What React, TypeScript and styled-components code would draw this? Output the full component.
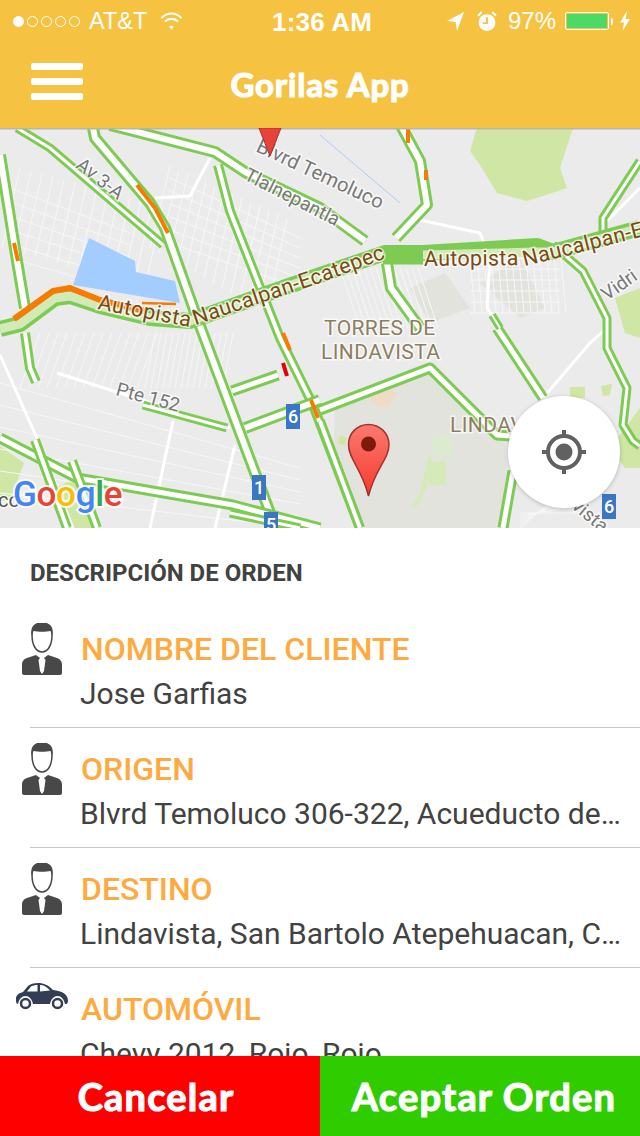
import styled, { createGlobalStyle } from 'styled-components'

const GlobalStyle = createGlobalStyle`
  html, body {
    margin: 0;
    padding: 0;
    background: #fff;
    font-family: Roboto, "Liberation Sans", sans-serif;
  }
`

const Screen = styled.div`
  width: 640px;
  height: 1136px;
  display: flex;
  flex-direction: column;
  overflow: hidden;
`

const Header = styled.header`
  height: 128px;
  flex: none;
  background: #f5c242;
  color: #fff;
  display: flex;
  flex-direction: column;
`

const StatusBar = styled.div`
  height: 40px;
  box-sizing: border-box;
  padding: 2px 10px 0 13px;
  display: flex;
  align-items: center;
  font-family: "Liberation Sans", Arial, sans-serif;
  font-size: 24px;
  position: relative;
`

const StatusLeft = styled.div`
  display: flex;
  align-items: center;
  gap: 9px;
`

const StatusRight = styled.div`
  margin-left: auto;
  display: flex;
  align-items: center;
`

const Clock = styled.div`
  position: absolute;
  left: 272px;
  top: 7px;
  font-size: 26px;
  font-weight: 700;
  letter-spacing: 0.2px;
`

const Dots = styled.div`
  display: flex;
  gap: 3px;
`

const Dot = styled.span<{ $on?: boolean }>`
  width: 11px;
  height: 11px;
  box-sizing: border-box;
  border: 1px solid #fff;
  border-radius: 50%;
  background: ${(p) => (p.$on ? '#fff' : 'transparent')};
`

const Carrier = styled.span`
  font-size: 23.5px;
`

const WifiIcon = styled.svg`
  margin-left: 4px;
`

const AlarmIcon = styled.svg`
  margin-left: 13px;
`

const Percent = styled.span`
  margin: 0 9px 0 11px;
`

const Battery = styled.div`
  width: 44px;
  height: 18px;
  box-sizing: border-box;
  padding: 1px;
  border: 1px solid #fff;
  border-radius: 2px;
  background-clip: content-box;
  background-color: #4cd964;
`

const BatteryTip = styled.span`
  width: 2px;
  height: 7px;
  margin: 0 7px 0 2px;
  background: #fff;
  border-radius: 0 2px 2px 0;
`

const NavBar = styled.div`
  flex: 1;
  display: flex;
  align-items: center;
  justify-content: center;
  position: relative;
  padding-bottom: 1px;
`

const Burger = styled.div`
  position: absolute;
  left: 31px;
  top: 23px;
  width: 52px;
  display: flex;
  flex-direction: column;
  gap: 8px;
`

const BurgerBar = styled.span`
  height: 7px;
  background: #fff;
  border-radius: 2px;
`

const roundedText = `
  font-family: Lato, "Open Sans", sans-serif;
  font-weight: 700;
  color: #fff;
  -webkit-text-stroke: 1.2px #fff;
`

const AppTitle = styled.h1`
  ${roundedText}
  margin: 0;
  font-size: 33px;
  letter-spacing: 0.8px;
`

const MapArea = styled.div`
  height: 400px;
  flex: none;
  position: relative;
  background: #ebebeb;
  overflow: hidden;
`

const MapSvg = styled.svg`
  display: block;
  width: 640px;
  height: 400px;
`

const LocateButton = styled.button`
  position: absolute;
  left: 508px;
  top: 268px;
  width: 112px;
  height: 112px;
  padding: 0;
  border: none;
  border-radius: 50%;
  background: #fff;
  box-shadow: 0 1px 4px rgba(0, 0, 0, 0.22);
  display: flex;
  align-items: center;
  justify-content: center;
`

const Sheet = styled.section`
  flex: 1;
  min-height: 0;
  overflow: hidden;
  background: #fff;
`

const SheetTitle = styled.h2`
  margin: 0;
  padding: 31px 0 0 30px;
  height: 80px;
  box-sizing: border-box;
  font-size: 24px;
  line-height: 28px;
  font-weight: 700;
  color: #424242;
  text-transform: uppercase;
`

const Row = styled.div`
  height: 120px;
  box-sizing: border-box;
  margin-left: 30px;
  display: flex;
  border-bottom: 1px solid #c8c8c8;
  &:last-child {
    border-bottom: none;
  }
`

const RowIcon = styled.div`
  width: 60px;
  margin: 15px 8px 0 -18px;
  flex: none;
  display: flex;
  justify-content: center;
  align-items: flex-start;
`

const RowBody = styled.div`
  min-width: 0;
  flex: 1;
  padding: 21px 16px 0 0;
`

const RowLabel = styled.div`
  padding-left: 1px;
  font-size: 32px;
  line-height: 40px;
  font-weight: 500;
  color: #ffaa40;
  text-transform: uppercase;
`

const RowValue = styled.div`
  font-size: 30px;
  line-height: 40px;
  margin-top: 5px;
  color: #424242;
  white-space: nowrap;
  overflow: hidden;
  text-overflow: ellipsis;
`

const Footer = styled.footer`
  height: 80px;
  flex: none;
  display: grid;
  grid-template-columns: 1fr 1fr;
`

const ActionButton = styled.button<{ $bg: string }>`
  ${roundedText}
  border: none;
  padding: 0;
  background: ${(p) => p.$bg};
  font-size: 38px;
  letter-spacing: 1.2px;
  &:first-child {
    padding-right: 8px;
  }
  &:last-child {
    padding-left: 8px;
  }
`

type Road = { d: string; w?: number }

const roads: Road[] = [
  { d: 'M17 0L50 20L163 117', w: 3 },
  { d: 'M93 0L95 10L150 75L165 100L197 190L270 385L276 400', w: 6 },
  { d: 'M110 -3L215 24L245 44L320 80L365 113', w: 6 },
  { d: 'M218 37L230 83L263 167L280 210L313 277L360 400', w: 4 },
  { d: 'M0 27L17 133L25 180', w: 6 },
  { d: 'M25 205L30 240L36 254', w: 4 },
  { d: 'M400 -4L420 33L427 77L396 110', w: 6 },
  { d: 'M387 135L391 160L420 200', w: 6 },
  { d: 'M553 117L583 143L607 190L607 220L627 260L623 297L633 313L640 318', w: 3 },
  { d: 'M497 200L543 270', w: 5 },
  { d: 'M492 187L500 200', w: 2 },
  { d: 'M320 282L430 240L497 307L510 308', w: 5 },
  { d: 'M320 293L360 400', w: 4 },
  { d: 'M513 343L503 400', w: 5 },
  { d: 'M0 310L77 350L233 377L320 400', w: 5 },
  { d: 'M35 312L67 400', w: 4 },
  { d: 'M72 333L97 400', w: 4 },
  { d: 'M143 277L227 300', w: 3 },
  { d: 'M232 263L278 247', w: 5 },
  { d: 'M245 300L320 272', w: 6 },
  { d: 'M640 33L603 90L603 103', w: 3 },
  { d: 'M230 385L300 400', w: 3 },
]

const whiteStreets = [
  'M0 227L40 317L73 400',
  'M57 245L230 300',
  'M173 293L150 400',
  'M235 317L215 400',
  'M155 70L190 68L210 30',
  'M420 92L480 105L490 130L487 180L500 200',
  'M543 270L590 215L607 200',
  'M600 100L640 60',
]

const thinStreets: string[] = []
for (let i = 0; i < 14; i++) {
  thinStreets.push(`M${20 + i * 11} ${40 + i * 3}L${2 + i * 11} ${120 + i * 3}`)
  thinStreets.push(`M${170 + i * 9} ${38 + i * 4}L${150 + i * 9} ${120 + i * 5}`)
  thinStreets.push(`M${40 + i * 9} 205L${20 + i * 9} 260`)
  thinStreets.push(`M${155 + i * 6} 205L${145 + i * 6} 260`)
  thinStreets.push(`M${470 + i * 7} 130L${475 + i * 7} 185`)
  thinStreets.push(`M${340 + i * 6} 140L${360 + i * 6} 200`)
}
for (let i = 0; i < 6; i++) {
  thinStreets.push(`M10 ${60 + i * 14}L130 ${105 + i * 12}`)
  thinStreets.push(`M170 ${50 + i * 13}L300 ${110 + i * 10}`)
  thinStreets.push(`M0 ${255 + i * 22}L300 ${340 + i * 12}`)
  thinStreets.push(`M470 ${130 + i * 11}L560 ${130 + i * 11}`)
  thinStreets.push(`M590 ${340 + i * 9}L520 ${400 - i * 3}`)
}

const MapLabel = styled.text`
  font-family: Roboto, sans-serif;
  paint-order: stroke;
  stroke: rgba(255, 255, 255, 0.7);
  stroke-width: 3px;
`

function MapDrawing() {
  return (
    <MapSvg viewBox="0 0 640 400">
      <defs>
        <path id="highwayWest" d="M97 181L190 199L320 155L392 128" />
        <path id="highwayEast" d="M424 138L530 137L645 108" />
        <linearGradient id="pinFill" x1="0" y1="0" x2="0" y2="1">
          <stop offset="0" stopColor="#fb7a70" />
          <stop offset="1" stopColor="#f6392f" />
        </linearGradient>
      </defs>
      <rect width="640" height="400" fill="#ebebeb" />
      <path d="M477 0L573 0L560 40L567 60L527 73L497 65L480 37L470 23Z" fill="#cfe6a4" />
      <path d="M610 320L640 280V340L625 340Z" fill="#cfe6a4" />
      <path d="M0 318L24 335L10 372L0 373Z" fill="#cfe6a4" />
      <path d="M56 360L70 400H95L75 350Z" fill="#cfe6a4" />
      <path d="M615 170L640 160V210L625 205Z" fill="#cfe6a4" />
      <path d="M335 280L430 240L505 310L510 400L365 400L333 330Z" fill="#e3e3de" />
      <path d="M410 160L445 145L470 180L430 195Z" fill="#e3e3de" />
      <path d="M480 155L520 130L545 180L520 190Z" fill="#e3e3de" />
      <path d="M362 263L388 258L397 265L388 280L375 276Z" fill="#f0dcc5" />
      <path d="M433 307H452V327H433Z" fill="#dcead0" />
      <path d="M429 333H446V357H429Z" fill="#d6e9b8" />
      <path d="M430 327L425 360L413 380L420 372Z" fill="#d6e9b8" stroke="#d6e9b8" strokeWidth="3" />
      <path d="M570 259H585V270H570ZM601 258L612 256L610 267L603 268ZM340 307L347 310L345 318L338 315Z" fill="#cfe6a4" />
      <g stroke="#f7f7f7" strokeWidth="1" fill="none">
        {thinStreets.map((d, i) => (
          <path key={i} d={d} />
        ))}
      </g>
      <g stroke="#fff" strokeWidth="3" fill="none">
        {whiteStreets.map((d, i) => (
          <path key={i} d={d} />
        ))}
      </g>
      <path d="M89 110L135 133L136 144L175 153L180 175L73 157Z" fill="#a3cdff" />
      <g fill="none" strokeLinejoin="round">
        {roads.map((r, i) => (
          <g key={i}>
            <path d={r.d} stroke="#7dcb52" strokeWidth={(r.w ?? 4) + 6} />
            <path d={r.d} stroke="#fff" strokeWidth={r.w ?? 4} />
          </g>
        ))}
        <path d="M0 201L20 196L55 170L70 168L100 178L150 190L190 193L320 147L385 125L423 125L537 118L553 124L640 100" stroke="#7dcb52" strokeWidth="16" />
        <path d="M0 201L20 196L55 170L70 168L100 178L150 190L190 193L320 147L385 127L423 127L537 124L553 124L640 100" stroke="#d3eab8" strokeWidth="9" />
        <path d="M383 128L423 128" stroke="#7dcb52" strokeWidth="17" />
        <path d="M14 191L53 163L70 160L100 172L145 183" stroke="#f57c00" strokeWidth="6" />
        <path d="M137 57L155 80L168 105" stroke="#f57c00" strokeWidth="4" />
        <path d="M14 115L18 133M283 205L290 222M311 272L318 290M426 42L426 52M408 0L408 15" stroke="#f57c00" strokeWidth="4" />
        <path d="M283 235L287 248" stroke="#e60000" strokeWidth="4" />
        <path d="M142 175L176 176" stroke="#f57c00" strokeWidth="2.5" />
        <path d="M320 7L400 75" stroke="#a9ccf2" strokeWidth="1" />
      </g>
      <rect width="640" height="1.500" fill="#b5b5b5" />

      <MapLabel fontSize="19" fill="#777" transform="translate(75 39) rotate(38)">Av 3-A</MapLabel>
      <MapLabel fontSize="20" fill="#777" transform="translate(255 23) rotate(25)">Blvrd Temoluco</MapLabel>
      <MapLabel fontSize="19" fill="#777" transform="translate(243 51) rotate(27)">Tlalnepantla</MapLabel>
      <MapLabel fontSize="19" fill="#777" transform="translate(115 267) rotate(15)">Pte 152</MapLabel>
      <MapLabel fontSize="19" fill="#777" transform="translate(607 173) rotate(-35)">Vidri</MapLabel>
      <MapLabel fontSize="19" fill="#777" transform="translate(563 373) rotate(40)">avista</MapLabel>
      <MapLabel fontSize="21.500" fill="#7b4a12" letterSpacing="0.3">
        <textPath href="#highwayWest">Autopista Naucalpan-Ecatepec</textPath>
      </MapLabel>
      <MapLabel fontSize="21.500" fill="#7b4a12" letterSpacing="0.3">
        <textPath href="#highwayEast">Autopista Naucalpan-E</textPath>
      </MapLabel>
      <MapLabel fontSize="21" fill="#8d7e60" letterSpacing="0.4" x="324" y="207">TORRES DE</MapLabel>
      <MapLabel fontSize="21" fill="#8d7e60" letterSpacing="0.4" x="321" y="231">LINDAVISTA</MapLabel>
      <MapLabel fontSize="21" fill="#8d7e60" letterSpacing="0.4" x="450" y="304">LINDAVISTA</MapLabel>
      <MapLabel fontSize="20" fill="#555" x="-2" y="379">co</MapLabel>

      <g fontFamily="Roboto, sans-serif" fontSize="18" fontWeight="500" fill="#fff" textAnchor="middle">
        <rect x="286" y="276" width="14" height="25" fill="#3a76c4" />
        <text x="293" y="295">6</text>
        <rect x="252" y="347" width="14" height="25" fill="#3a76c4" />
        <text x="259" y="366">1</text>
        <rect x="264" y="384" width="14" height="25" fill="#3a76c4" />
        <text x="271" y="403">5</text>
        <rect x="602" y="366" width="14" height="25" fill="#3a76c4" />
        <text x="609" y="385">6</text>
      </g>

      <path d="M259 0H281L270 28Z" fill="#e8423c" stroke="#a8302a" strokeWidth="1" />
      <path
        d="M368.500 296.500C357 296.500 348.500 305.500 348.500 316.500C348.500 331 362 341 368.500 368C375 341 389 331 389 316.500C389 305.500 380 296.500 368.500 296.500Z"
        fill="url(#pinFill)"
        stroke="#a5322a"
        strokeWidth="1.500"
      />
      <circle cx="368.500" cy="316" r="7.500" fill="#7e1a0c" />

      <text
        x="13"
        y="378"
        fontFamily="Roboto, sans-serif"
        fontSize="35"
        fontWeight="500"
        letterSpacing="-0.300"
        paintOrder="stroke"
        stroke="rgba(255,255,255,0.8)"
        strokeWidth="4"
      >
        <tspan fill="#4285f4">G</tspan>
        <tspan fill="#ea4335">o</tspan>
        <tspan fill="#fbbc05">o</tspan>
        <tspan fill="#4285f4">g</tspan>
        <tspan fill="#34a853">l</tspan>
        <tspan fill="#ea4335">e</tspan>
      </text>
    </MapSvg>
  )
}

function PersonIcon() {
  return (
    <svg width="40" height="52" viewBox="0 0 40 52">
      <path d="M10 12C9 3 14 0 20 0C26 0 31 3 30 12C30 22 26 29 20 29C14 29 10 22 10 12Z" fill="#fff" stroke="#484848" strokeWidth="1.500" />
      <path d="M10 13C9 3 14 0 20 0C26 0 31 3 30 13L28.500 8C24 9 16 9 11.500 8Z" fill="#484848" />
      <path
        d="M0 42C0 38 2 36 5 35L14 32L18 35L16.500 37L18 48L20 51L22 48L23.500 37L22 35L26 32L35 35C38 36 40 38 40 42V50C40 51 39 52 38 52H2C1 52 0 51 0 50Z"
        fill="#484848"
      />
    </svg>
  )
}

function CarIcon() {
  return (
    <svg width="52" height="27" viewBox="0 0 52 27">
      <path
        d="M0 16C0 12 3 10 7 9L12 3C14 1 18 0 22 0C28 0 32 2 37 7C46 8 52 11 52 18C52 20 51 21 50 21H49C48 16 45 13 41.500 13C38 13 35 16 34 21H17C16 16 13 13 9.500 13C6 13 3 16 2 21C1 21 0 20 0 18Z"
        fill="#333d54"
      />
      <path d="M11 8.500L15 3.500C17 2.500 19 2 21.500 2V8.500ZM24 2C28 2 31 4 34 7.500L24 8.500Z" fill="#fff" />
      <circle cx="9.500" cy="20.500" r="4.500" fill="#fff" stroke="#333d54" strokeWidth="2.500" />
      <circle cx="41.500" cy="20.500" r="4.500" fill="#fff" stroke="#333d54" strokeWidth="2.500" />
    </svg>
  )
}

const rows = [
  { label: 'Nombre del cliente', value: 'Jose Garfias', icon: <PersonIcon /> },
  { label: 'Origen', value: 'Blvrd Temoluco 306-322, Acueducto de Tenayuca', icon: <PersonIcon /> },
  { label: 'Destino', value: 'Lindavista, San Bartolo Atepehuacan, Ciudad de México', icon: <PersonIcon /> },
  { label: 'Automóvil', value: 'Chevy 2012, Rojo, Rojo', icon: <CarIcon /> },
]

export default function App() {
  return (
    <Screen>
      <GlobalStyle />
      <Header>
        <StatusBar>
          <StatusLeft>
            <Dots>
              <Dot $on />
              <Dot />
              <Dot />
              <Dot />
              <Dot />
            </Dots>
            <Carrier>AT&amp;T</Carrier>
            <WifiIcon width="23" height="20" viewBox="0 0 22 20" fill="none" stroke="#fff" strokeWidth="2.200">
              <path d="M1 7C7 1 15 1 21 7" />
              <path d="M4.500 10.500C8 7 14 7 17.500 10.500" />
              <path d="M8.500 15.500L11 18.500L13.500 15.500C12 14.500 10 14.500 8.500 15.500Z" fill="#fff" stroke="none" />
            </WifiIcon>
          </StatusLeft>
          <Clock>1:36 AM</Clock>
          <StatusRight>
            <svg width="17" height="19" viewBox="0 0 16 18" fill="#fff">
              <path d="M16 0L0 8.500L8 9.500L9.500 18Z" />
            </svg>
            <AlarmIcon width="20" height="21" viewBox="0 0 18 20" fill="none">
              <circle cx="9" cy="11" r="8" fill="#fff" />
              <path d="M9 6V11.500H5" stroke="#f5c242" strokeWidth="1.800" />
              <path d="M0.500 4.500L4 1M17.500 4.500L14 1" stroke="#fff" strokeWidth="2" />
            </AlarmIcon>
            <Percent>97%</Percent>
            <Battery />
            <BatteryTip />
            <svg width="10" height="20" viewBox="0 0 10 20" fill="#fff">
              <path d="M7 0L0 11.500H4L2.500 20L10 8H5.500Z" />
            </svg>
          </StatusRight>
        </StatusBar>
        <NavBar>
          <Burger>
            <BurgerBar />
            <BurgerBar />
            <BurgerBar />
          </Burger>
          <AppTitle>Gorilas App</AppTitle>
        </NavBar>
      </Header>
      <MapArea>
        <MapDrawing />
        <LocateButton aria-label="Mi ubicación">
          <svg width="44" height="44" viewBox="0 0 44 44" fill="none">
            <circle cx="22" cy="22" r="16" stroke="#616161" strokeWidth="4" />
            <circle cx="22" cy="22" r="8.500" fill="#616161" />
            <path d="M22 0V8M22 36V44M0 22H8M36 22H44" stroke="#616161" strokeWidth="4" />
          </svg>
        </LocateButton>
      </MapArea>
      <Sheet>
        <SheetTitle>Descripción de orden</SheetTitle>
        {rows.map((row) => (
          <Row key={row.label}>
            <RowIcon>{row.icon}</RowIcon>
            <RowBody>
              <RowLabel>{row.label}</RowLabel>
              <RowValue>{row.value}</RowValue>
            </RowBody>
          </Row>
        ))}
      </Sheet>
      <Footer>
        <ActionButton $bg="#ff0000">Cancelar</ActionButton>
        <ActionButton $bg="#2fcc00">Aceptar Orden</ActionButton>
      </Footer>
    </Screen>
  )
}
